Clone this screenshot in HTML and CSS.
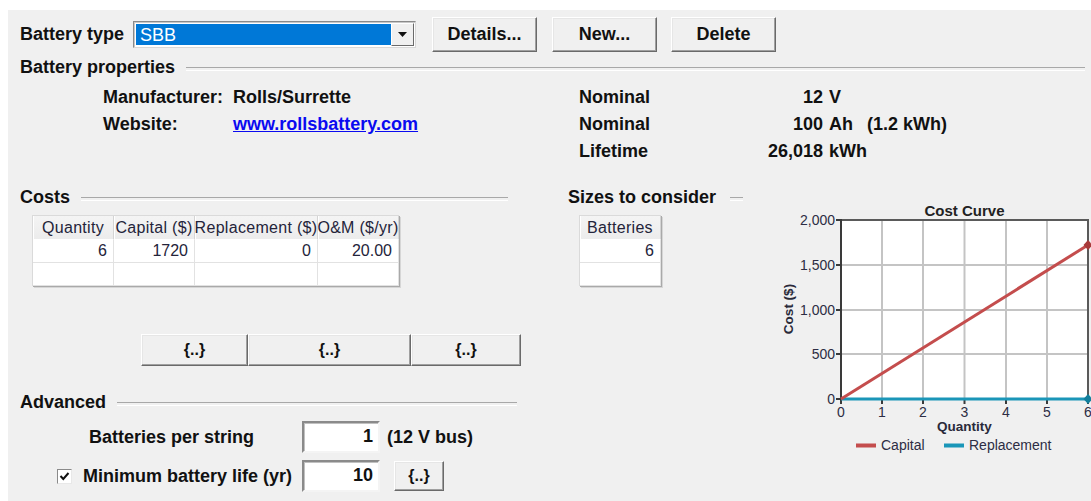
FILE: index.html
```html
<!DOCTYPE html>
<html lang="en">
<head>
<meta charset="utf-8">
<title>Battery</title>
<link rel="stylesheet" href="styles.css">
</head>
<body>
<div class="dialog">
  <div class="type-row">
    <span>Battery type</span>
    <div class="combo">
      <span class="combo-value">SBB</span>
      <span class="combo-btn"><svg width="9" height="5" viewBox="0 0 9 5"><path d="M0 0h9L4.5 5z" fill="#111"/></svg></span>
    </div>
    <button class="btn btn-top btn-details">Details...</button>
    <button class="btn btn-top btn-new">New...</button>
    <button class="btn btn-top btn-delete">Delete</button>
  </div>

  <div class="group-head head-props"><span>Battery properties</span></div>
  <div class="props">
    <span>Manufacturer:</span><span>Rolls/Surrette</span><span>Nominal</span><span class="num">12</span><span class="unit">V</span>
    <span>Website:</span><span><a class="link" href="#">www.rollsbattery.com</a></span><span>Nominal</span><span class="num">100</span><span class="unit">Ah<span class="unit-extra">(1.2 kWh)</span></span>
    <span></span><span></span><span>Lifetime</span><span class="num">26,018</span><span class="unit">kWh</span>
  </div>

  <div class="lower">
    <div class="col-costs">
      <div class="group-head head-costs"><span>Costs</span></div>
      <table class="grid cost-grid">
        <colgroup><col class="w81"><col class="w81"><col class="w123"><col class="w81"></colgroup>
        <thead>
          <tr><th><div>Quantity</div></th><th><div>Capital ($)</div></th><th><div>Replacement ($)</div></th><th><div>O&amp;M ($/yr)</div></th></tr>
        </thead>
        <tbody>
          <tr><td>6</td><td>1720</td><td>0</td><td>20.00</td></tr>
          <tr><td></td><td></td><td></td><td></td></tr>
        </tbody>
      </table>
      <div class="curve-btns">
        <button class="btn btn-curve c1">{..}</button>
        <button class="btn btn-curve c2">{..}</button>
        <button class="btn btn-curve c3">{..}</button>
      </div>

      <div class="group-head head-adv"><span>Advanced</span></div>
      <div class="adv-row">
        <div class="adv-label pad-string">Batteries per string</div>
        <div class="field">1</div>
        <div class="adv-note">(12 V bus)</div>
      </div>
      <div class="adv-row">
        <div class="adv-label pad-life">
          <span class="check"><svg width="11" height="11" viewBox="0 0 11 11"><path d="M1.5 5l2.8 3L9.5 2" fill="none" stroke="#111" stroke-width="2"/></svg></span>
          <span>Minimum battery life (yr)</span>
        </div>
        <div class="field">10</div>
        <button class="btn btn-small">{..}</button>
      </div>
    </div>

    <div class="col-sizes">
      <div class="group-head head-sizes"><span>Sizes to consider</span></div>
      <table class="grid size-grid">
        <colgroup><col class="w81"></colgroup>
        <thead><tr><th><div>Batteries</div></th></tr></thead>
        <tbody>
          <tr><td>6</td></tr>
          <tr><td></td></tr>
        </tbody>
      </table>
    </div>

    <div class="col-chart">
      <svg class="chart" width="311" height="260" viewBox="0 0 311 260">
        <text class="c-title" x="184.5" y="16" text-anchor="middle">Cost Curve</text>
        <rect x="61" y="20" width="247" height="179" fill="#fff"/>
        <g stroke="#c4c4c4" stroke-width="2">
          <line x1="102" y1="20" x2="102" y2="199"/>
          <line x1="143" y1="20" x2="143" y2="199"/>
          <line x1="184.5" y1="20" x2="184.5" y2="199"/>
          <line x1="226" y1="20" x2="226" y2="199"/>
          <line x1="267" y1="20" x2="267" y2="199"/>
          <line x1="61" y1="65" x2="308" y2="65"/>
          <line x1="61" y1="110" x2="308" y2="110"/>
          <line x1="61" y1="154" x2="308" y2="154"/>
        </g>
        <path d="M61 20H308V199" fill="none" stroke="#5a5a5a" stroke-width="2"/>
        <g stroke="#3a3a3a" stroke-width="2">
          <line x1="61" y1="19" x2="61" y2="200"/>
          <line x1="56" y1="20" x2="61" y2="20"/>
          <line x1="56" y1="65" x2="61" y2="65"/>
          <line x1="56" y1="110" x2="61" y2="110"/>
          <line x1="56" y1="154" x2="61" y2="154"/>
          <line x1="56" y1="199" x2="61" y2="199"/>
          <line x1="61" y1="199" x2="61" y2="204"/>
          <line x1="102" y1="199" x2="102" y2="204"/>
          <line x1="143" y1="199" x2="143" y2="204"/>
          <line x1="184.5" y1="199" x2="184.5" y2="204"/>
          <line x1="226" y1="199" x2="226" y2="204"/>
          <line x1="267" y1="199" x2="267" y2="204"/>
          <line x1="308" y1="199" x2="308" y2="204"/>
        </g>
        <line x1="61" y1="199" x2="308" y2="199" stroke="#1a96b8" stroke-width="3"/>
        <line x1="61" y1="199" x2="308" y2="45" stroke="#c44d4d" stroke-width="3"/>
        <path d="M308 40l4.5 5-4.5 5-4.5-5z" fill="#a83a3a"/>
        <path d="M308 194l4.5 5-4.5 5-4.5-5z" fill="#137f9c"/>
        <g class="c-tick" text-anchor="end">
          <text x="55" y="25">2,000</text>
          <text x="55" y="70">1,500</text>
          <text x="55" y="115">1,000</text>
          <text x="55" y="159">500</text>
          <text x="55" y="204">0</text>
        </g>
        <g class="c-tick" text-anchor="middle">
          <text x="61" y="217">0</text>
          <text x="102" y="217">1</text>
          <text x="143" y="217">2</text>
          <text x="184.5" y="217">3</text>
          <text x="226" y="217">4</text>
          <text x="267" y="217">5</text>
          <text x="308" y="217">6</text>
        </g>
        <text class="c-axis" x="184.5" y="231" text-anchor="middle">Quantity</text>
        <text class="c-axis" transform="translate(13 109) rotate(-90)" text-anchor="middle">Cost ($)</text>
        <line x1="76" y1="245.5" x2="96" y2="245.5" stroke="#c44d4d" stroke-width="4"/>
        <text class="c-tick" x="101" y="250">Capital</text>
        <line x1="164" y1="245.5" x2="184" y2="245.5" stroke="#1a96b8" stroke-width="4"/>
        <text class="c-tick" x="189" y="250">Replacement</text>
      </svg>
    </div>
  </div>
</div>
</body>
</html>
```

FILE: styles.css
```css
* {
  box-sizing: border-box;
}

html,
body {
  margin: 0;
  background: #fff;
}

body {
  font-family: "Liberation Sans", Arial, sans-serif;
}

.dialog {
  margin: 10px 0 0 8px;
  min-height: 491px;
  background: #f0f0f0;
  padding: 7px 6px 0 12px;
  font-size: 18px;
  font-weight: 700;
  color: #111;
}

/* ---- top row: type selector and actions ---- */
.type-row {
  display: flex;
  align-items: center;
  height: 35px;
}

.combo {
  display: flex;
  width: 283px;
  height: 27px;
  margin-left: 9px;
  padding: 1px;
  background: #fff;
  border: 1px solid #8a8a8a;
  border-right-color: #d8d8d8;
  border-bottom-color: #d8d8d8;
  box-shadow: inset 1px 1px 0 #c8c8c8;
}

.combo-value {
  flex: 1;
  margin: 1px 0 1px 1px;
  padding-left: 4px;
  background: #0078d7;
  color: #fff;
  font-weight: 400;
  line-height: 23px;
}

.combo-btn {
  width: 23px;
  display: flex;
  align-items: center;
  justify-content: center;
  background: #f0f0f0;
  border: 1px solid;
  border-color: #fff #6a6a6a #6a6a6a #fff;
}

.btn {
  font-family: inherit;
  font-weight: 700;
  color: #111;
  background: #f0f0f0;
  border: 1px solid;
  border-color: #fff #6a6a6a #6a6a6a #fff;
  box-shadow: inset -1px -1px 0 #a0a0a0, inset 1px 1px 0 #e6e6e6;
  padding: 0;
}

.btn-top {
  width: 105px;
  height: 35px;
  font-size: 18px;
}

.btn-details {
  margin-left: 16px;
}

.btn-new {
  margin-left: 15px;
}

.btn-delete {
  margin-left: 14px;
}

/* ---- section headings with etched rule ---- */
.group-head {
  display: flex;
  align-items: center;
  height: 20px;
  line-height: 20px;
  gap: 11px;
}

.group-head::after {
  content: "";
  flex: 1;
  height: 2px;
  border-top: 1px solid #a8a8a8;
  border-bottom: 1px solid #fff;
  margin-top: 3px;
}

.head-props {
  margin-top: 5px;
}

.head-costs {
  width: 488px;
}

.head-sizes {
  width: 175px;
  gap: 14px;
}

.head-adv {
  width: 497px;
  margin-top: 26px;
}

/* ---- battery properties ---- */
.props {
  display: grid;
  grid-template-columns: 130px 346px 150px 94px auto;
  grid-auto-rows: 27px;
  line-height: 27px;
  margin: 7px 0 0 83px;
}

.num {
  text-align: right;
}

.unit {
  padding-left: 6px;
}

.unit-extra {
  padding-left: 14px;
}

.link {
  color: #0a0af0;
  text-decoration: underline;
}

/* ---- lower half: costs, sizes, chart ---- */
.lower {
  display: grid;
  grid-template-columns: 548px 212px 311px;
  margin-top: 22px;
}

.grid {
  border-collapse: separate;
  border-spacing: 0;
  table-layout: fixed;
  background: #fff;
  font-size: 16px;
  font-weight: 400;
  color: #24243a;
  border-top: 1px solid #dadada;
  border-left: 1px solid #dadada;
  box-shadow: 1px 1px 0 #a9a9a9, 2px 2px 0 #d6d6d6;
}

.w81 {
  width: 81px;
}

.w123 {
  width: 123px;
}

.grid th {
  height: 24px;
  padding: 0;
  font-weight: 400;
  background: linear-gradient(#f4f4f4, #ececec);
  border-right: 1px solid #d4d4d4;
  border-bottom: 1px solid #fff;
  box-shadow: inset 1px 0 0 #fff;
}

.grid th div {
  display: flex;
  justify-content: center;
  overflow: hidden;
  white-space: nowrap;
  letter-spacing: 0.3px;
}

.grid td {
  height: 23px;
  padding: 0 6px 0 0;
  text-align: right;
  border-right: 1px solid #e2e2e2;
  border-bottom: 1px solid #e2e2e2;
}

.cost-grid {
  width: 367px;
  margin: 8px 0 0 12px;
}

.size-grid {
  width: 82px;
  margin: 8px 0 0 11px;
}

.curve-btns {
  display: flex;
  margin: 48px 0 0 121px;
}

.btn-curve {
  height: 32px;
  font-size: 16px;
}

.c1 {
  width: 107px;
}

.c2 {
  width: 163px;
}

.c3 {
  width: 110px;
}

/* ---- advanced settings ---- */
.adv-row {
  display: grid;
  grid-template-columns: 282px 78px auto;
  align-items: center;
  height: 32px;
  margin-top: 7px;
}

.head-adv + .adv-row {
  margin-top: 9px;
}

.adv-label {
  display: flex;
  align-items: center;
}

.pad-string {
  padding-left: 69px;
}

.pad-life {
  padding-left: 37px;
}

.check {
  width: 15px;
  height: 15px;
  display: flex;
  align-items: center;
  justify-content: center;
  margin-right: 11px;
  background: #fff;
  border: 1px solid;
  border-color: #8a8a8a #e8e8e8 #e8e8e8 #8a8a8a;
}

.field {
  height: 32px;
  padding: 2px 5px 0 0;
  text-align: right;
  background: #fff;
  border: 2px solid;
  border-color: #8a8a8a #f4f4f4 #f4f4f4 #8a8a8a;
  box-shadow: inset 1px 1px 0 #c0c0c0;
  line-height: 22px;
}

.adv-note {
  padding-left: 7px;
}

.btn-small {
  width: 50px;
  height: 30px;
  margin-left: 14px;
  font-size: 16px;
}

/* ---- cost curve chart ---- */
.chart {
  display: block;
  margin-top: 13px;
  font-family: "Liberation Sans", Arial, sans-serif;
}

.c-title {
  font-size: 15px;
  font-weight: 700;
  fill: #222;
}

.c-tick {
  font-size: 14px;
  font-weight: 400;
  fill: #2d2d44;
}

.c-axis {
  font-size: 13.5px;
  font-weight: 700;
  fill: #2a2a3a;
}
```
